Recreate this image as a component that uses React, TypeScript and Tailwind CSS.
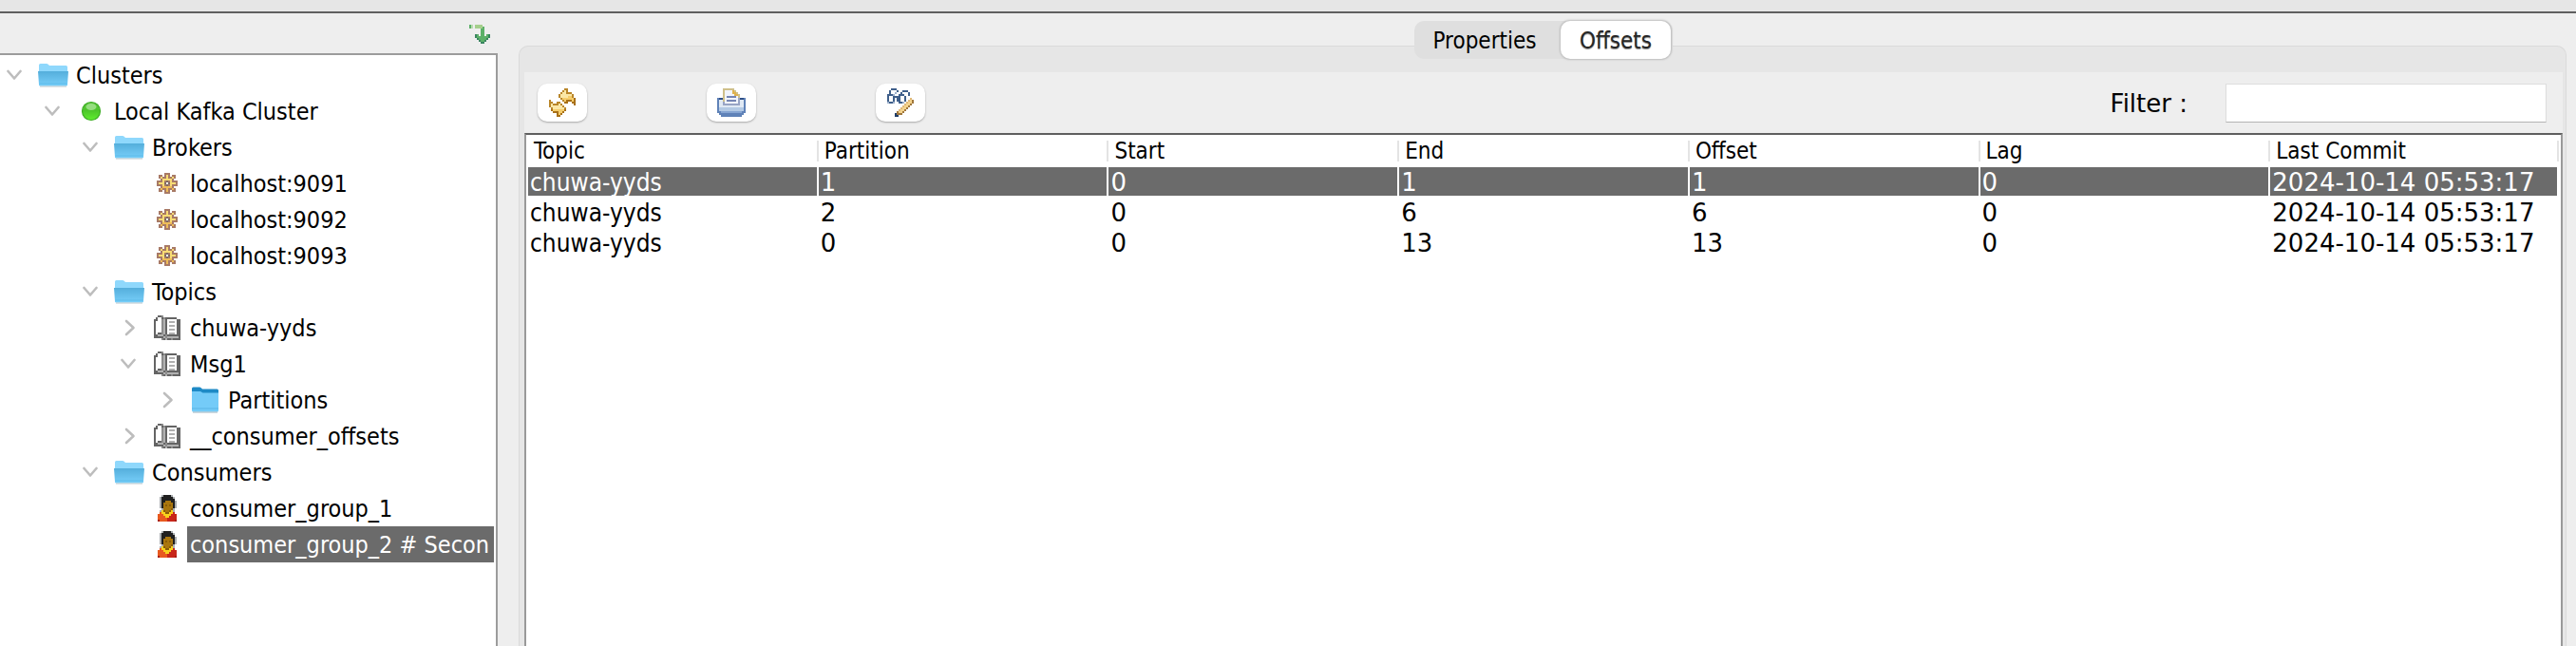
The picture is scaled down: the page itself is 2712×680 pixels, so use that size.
import { useState } from "react";

type Palette = Record<string, string>;

function PixelIcon({ rows, palette }: { rows: string[]; palette: Palette }) {
  const width = rows[0].length;
  const height = rows.length;
  return (
    <svg
      width={width * 2}
      height={height * 2}
      viewBox={`0 0 ${width} ${height}`}
      shapeRendering="crispEdges"
      aria-hidden="true"
      className="shrink-0"
    >
      {rows.flatMap((row, y) =>
        row.split("").map((key, x) =>
          palette[key] ? <rect key={`${x}-${y}`} x={x} y={y} width="1" height="1" fill={palette[key]} /> : null
        )
      )}
    </svg>
  );
}

const ArrowIcon = () => (
  <PixelIcon
    palette={{ G: "#5cb068", H: "#b9dcae", L: "#a5cf8c", D: "#3a8560" }}
    rows={[
      "GH.LLLL....",
      "GH.LLLLG...",
      "......GG...",
      "......GG...",
      "......GG...",
      "...DG.GG.GD",
      "...DGGGGGGD",
      "....DGGGGD.",
      ".....DGGD..",
      "......DD...",
    ]}
  />
);

const RefreshIcon = () => (
  <PixelIcon
    palette={{ D: "#b9862a", L: "#fbe7a6", M: "#f5cd6c", E: "#a87018" }}
    rows={[
      "........DD....",
      ".......DLD....",
      "......DLLDDD..",
      ".....DLLLLLLD.",
      ".....DLLLLMMD.",
      "......DMMMMMME",
      "D......DMEEEME",
      "DD..DD..EE..EE",
      "DLDDDLD......E",
      "DLLLLLLD......",
      ".DLLLLLLD.....",
      ".EMMMMMME.....",
      "..EEEMME......",
      "....EME.......",
      "....EE........",
    ]}
  />
);

const PrinterIcon = () => (
  <PixelIcon
    palette={{
      T: "#cfc08a",
      W: "#f1f4fb",
      O: "#e0b24c",
      P: "#7585b4",
      B: "#5f82b8",
      N: "#2f4f86",
      G: "#98a4c4",
      s: "#e0e9f4",
      m: "#b3c9e4",
      n: "#86a5d2",
    }}
    rows={[
      "...TTTTTT......",
      "...TWWWWOT.....",
      "...TWWWWOOT....",
      "...TWWWWWOOT...",
      "...TWPPPPPWT...",
      "BNNTWWWWWWWGNNB",
      "BssTWPPPPPWGssB",
      "BssGWWWWWWWGssB",
      "BssGGGGGGGGGssB",
      "BsssssssssssssB",
      "BmmmmmmmmmmmmmB",
      "BmmmmmmmmmmmmmB",
      "BBnnnnnnnnnnnBB",
      ".BBBBBBBBBBBBB.",
      "..BBBBBBBBBBB..",
    ]}
  />
);

const GlassesIcon = () => (
  <PixelIcon
    palette={{ G: "#3f5f8a", g: "#9db1cc", D: "#a0773c", L: "#f4d38c", M: "#e0b878", K: "#1f3c66" }}
    rows={[
      "..GGG.........",
      ".G...G..GGG...",
      ".G..g..G...G..",
      "GGGg..GGG..G..",
      "G..GGGG..G....",
      "G..G.GG..G..M.",
      "G..G.GG..G.MLD",
      "gGGg..GGg.MLLD",
      ".........MLLD.",
      "........MLLD..",
      ".......MLLD...",
      "......MLLD....",
      ".....DLLD.....",
      "....KDDD......",
      "....KK........",
    ]}
  />
);

const GearIcon = () => (
  <PixelIcon
    palette={{ D: "#a87a66", L: "#f8dc74", M: "#eebc58", C: "#7d6a62", W: "#ffffff" }}
    rows={[
      "....DDD....",
      ".DD.DLD.DD.",
      ".DLDDLDDLD.",
      "..DLLLLLD..",
      "DDDLDCDLDDD",
      "DLLLCWCLLLD",
      "DDDLDCDLDDD",
      "..DMMMMMD..",
      ".DMDDMDDMD.",
      ".DD.DMD.DD.",
      "....DDD....",
    ]}
  />
);

const BookIcon = () => (
  <PixelIcon
    palette={{ D: "#646464", d: "#8c8c8c", G: "#b0b0b0", W: "#ffffff" }}
    rows={[
      "..DDd.........",
      ".DWWDdDDDDDD..",
      "DDWWdGDWWWWWDD",
      "DWWWdGDWGGGWDD",
      "DWWWdGDWWWWWDD",
      "DWWWdGDWGGGWDD",
      "DWWWdGDWWWWWDD",
      "DWWWdGDWGGGWDD",
      "DWWWdGDWWWWWDD",
      "DWDDdGDWGGGWDD",
      "DDGGGDdDDDDDDD",
      "DDDDDGdGGGGGGD",
      "....dDGDDdDDDD",
    ]}
  />
);

const PersonIcon = () => (
  <PixelIcon
    palette={{ K: "#1f1f1f", g: "#a9adb0", B: "#a9760e", b: "#8a5c08", O: "#e8591f", Y: "#f8d21c", R: "#c8261a", r: "#a81c14" }}
    rows={[
      "..gKKKKg..",
      ".gKKKKKKg.",
      ".gKKKKKKK.",
      ".gKKBBBKKg",
      ".gKBBBBBKg",
      ".gKBbBbBKg",
      ".gKBBBBBKg",
      "..gBBBBbg.",
      ".gYbBBbYg.",
      ".OYYbbYYR.",
      "OOOYYYYRRR",
      "OOOOYYRRRR",
      "OOOOORRRRR",
      "rOOOORRRRr",
    ]}
  />
);

const OpenFolderIcon = () => (
  <svg width="32" height="26" viewBox="0 0 32 26" aria-hidden="true" className="shrink-0">
    <defs>
      <linearGradient id="folder-front" x1="0" y1="0" x2="0" y2="1">
        <stop offset="0" stopColor="#54aedb" />
        <stop offset="1" stopColor="#78cffa" />
      </linearGradient>
    </defs>
    <path d="M1 2.5Q1 1 2.500 1H9Q10 1 11 2L12 3H29.500Q31 3 31 4.500V24H1Z" fill="#8fd8fc" />
    <path d="M0 9H32L31 23Q31 24.500 29.500 24.500H2.500Q1 24.500 1 23Z" fill="url(#folder-front)" />
    <path d="M1.500 22H30.500" stroke="#5fbbe8" strokeWidth="1" />
    <path d="M2 25H30" stroke="#b9c6cc" strokeWidth="1" />
  </svg>
);

const ClosedFolderIcon = () => (
  <svg width="30" height="30" viewBox="0 0 30 30" aria-hidden="true" className="shrink-0">
    <path d="M1 3Q1 1.500 2.500 1.500H9Q10 1.500 11 2.500L12 3.500H27.500Q29 3.500 29 5V10H1Z" fill="#1e8ac6" />
    <path d="M1 6H10L12.500 7.500H29V26Q29 27.500 27.500 27.500H2.500Q1 27.500 1 26Z" fill="#74cbf8" />
    <path d="M1 24H29" stroke="#5ab4e4" strokeWidth="1" />
    <path d="M2 28H28" stroke="#9fb4bf" strokeWidth="1" />
  </svg>
);

const OnlineIcon = () => (
  <svg width="22" height="22" viewBox="0 0 22 22" aria-hidden="true" className="shrink-0">
    <defs>
      <linearGradient id="online" x1="0" y1="0" x2="0" y2="1">
        <stop offset="0" stopColor="#5fc840" />
        <stop offset="0.45" stopColor="#4cc42a" />
        <stop offset="1" stopColor="#5fee2e" />
      </linearGradient>
    </defs>
    <circle cx="11" cy="11" r="9.500" fill="url(#online)" stroke="#3fae26" strokeWidth="1.200" />
    <ellipse cx="11" cy="6.500" rx="5.500" ry="3.500" fill="#a6e394" opacity="0.8" />
  </svg>
);

const Chevron = ({ open }: { open: boolean }) => (
  <svg width="16" height="18" viewBox="0 0 16 18" fill="none" stroke="#bdbdbd" strokeWidth="2.600" strokeLinecap="round" strokeLinejoin="round" aria-hidden="true">
    <path d={open ? "M1.500 5L8 12.500L14.500 5" : "M6 2L13.500 9L6 16"} />
  </svg>
);

const icons = {
  folder: OpenFolderIcon,
  closed: ClosedFolderIcon,
  online: OnlineIcon,
  gear: GearIcon,
  book: BookIcon,
  person: PersonIcon,
};

type Node = { label: string; depth: number; icon: keyof typeof icons; open?: boolean };

const nodes: Node[] = [
  { label: "Clusters", depth: 0, icon: "folder", open: true },
  { label: "Local Kafka Cluster", depth: 1, icon: "online", open: true },
  { label: "Brokers", depth: 2, icon: "folder", open: true },
  { label: "localhost:9091", depth: 3, icon: "gear" },
  { label: "localhost:9092", depth: 3, icon: "gear" },
  { label: "localhost:9093", depth: 3, icon: "gear" },
  { label: "Topics", depth: 2, icon: "folder", open: true },
  { label: "chuwa-yyds", depth: 3, icon: "book", open: false },
  { label: "Msg1", depth: 3, icon: "book", open: true },
  { label: "Partitions", depth: 4, icon: "closed", open: false },
  { label: "__consumer_offsets", depth: 3, icon: "book", open: false },
  { label: "Consumers", depth: 2, icon: "folder", open: true },
  { label: "consumer_group_1", depth: 3, icon: "person" },
  { label: "consumer_group_2 # Secon", depth: 3, icon: "person" },
];

function Tree() {
  const [selected, setSelected] = useState(nodes.length - 1);
  return (
    <ul role="tree" aria-label="Clusters" className="min-h-0 flex-1 overflow-hidden border-t-2 border-r-2 border-[#9c9c9c] bg-white p-0.5 pl-0">
      {nodes.map((node, i) => {
        const Icon = icons[node.icon];
        return (
          <li
            key={node.label}
            role="treeitem"
            aria-selected={i === selected}
            aria-expanded={node.open}
            className="flex h-[38px] items-center"
            style={{ paddingLeft: 7 + node.depth * 40 }}
          >
            <span className="flex w-4 shrink-0 justify-center">
              {node.open !== undefined && <Chevron open={node.open} />}
            </span>
            <span className="ml-4 flex w-[34px] shrink-0 justify-center">
              <Icon />
            </span>
            <button
              type="button"
              onClick={() => setSelected(i)}
              className={
                "ml-1 h-[38px] px-[3px] text-left text-[25px] leading-[40px] whitespace-nowrap " +
                (i === selected ? "min-w-0 flex-1 bg-[#6b6b6b] text-white" : "text-black")
              }
            >
              {node.label}
            </button>
          </li>
        );
      })}
    </ul>
  );
}

const columns = ["Topic", "Partition", "Start", "End", "Offset", "Lag", "Last Commit"];
const records = [
  ["chuwa-yyds", "1", "0", "1", "1", "0", "2024-10-14 05:53:17"],
  ["chuwa-yyds", "2", "0", "6", "6", "0", "2024-10-14 05:53:17"],
  ["chuwa-yyds", "0", "0", "13", "13", "0", "2024-10-14 05:53:17"],
];

function OffsetsTable() {
  return (
    <div className="min-h-0 flex-1 overflow-hidden border-x-2 border-t-2 border-x-[#999999] border-t-[#5f5f5f] bg-white px-0.5">
      <table className="w-full table-fixed border-collapse text-left">
        <colgroup>
          {columns.map((name, i) => (
            <col key={name} className={i < columns.length - 1 ? "w-[14.3%]" : ""} />
          ))}
        </colgroup>
        <thead>
          <tr className="h-[34px]">
            {columns.map((name) => (
              <th key={name} scope="col" className="p-0 text-2xl font-normal">
                <div className="h-[22px] border-r-2 border-[#e4e4e4] pl-1.5 leading-[22px]">{name}</div>
              </th>
            ))}
          </tr>
        </thead>
        <tbody>
          {records.map((record, r) => (
            <tr key={r} className={r === 0 ? "h-8 text-white" : "h-8 text-black"}>
              {record.map((value, c) => (
                <td key={columns[c]} className="p-0 pr-0.5 pb-0.5">
                  <div
                    className={
                      (r === 0 ? "bg-[#6b6b6b] " : "") +
                      (c === 0 ? "" : "font-['DejaVu_Sans',sans-serif] ") +
                      "h-[30px] pl-0.5 text-[26px] leading-[32px] whitespace-nowrap"
                    }
                  >
                    {value}
                  </div>
                </td>
              ))}
            </tr>
          ))}
        </tbody>
      </table>
    </div>
  );
}

const tools = [
  { name: "Refresh", Icon: RefreshIcon },
  { name: "Print", Icon: PrinterIcon },
  { name: "View settings", Icon: GlassesIcon },
];

export default function App() {
  return (
    <div className="flex h-screen flex-col overflow-hidden bg-[#eeeeee] font-['DejaVu_Sans_Condensed','DejaVu_Sans',sans-serif] text-black">
      <div className="h-3.5 shrink-0 border-b-2 border-[#5f5f5f] bg-[#e6e6e6]" />
      <div className="flex min-h-0 flex-1">
        <aside className="flex w-[524px] shrink-0 flex-col">
          <div className="flex h-[42px] shrink-0 items-start justify-end pt-3 pr-2">
            <button type="button" aria-label="Jump to selection">
              <ArrowIcon />
            </button>
          </div>
          <Tree />
        </aside>

        <main className="mt-[34px] mr-2.5 ml-[22px] flex min-w-0 flex-1 flex-col rounded-t-[10px] border border-b-0 border-[#dadada] bg-[#e6e6e6] pr-[3px] pl-[5px]">
          <div role="tablist" className="-mt-[27px] mb-3.5 flex h-10 shrink-0 self-center rounded-[10px] bg-[#dfdfdf] pr-0.5 text-2xl">
            <button type="button" role="tab" aria-selected="false" className="w-[154px] pt-0.5 pr-1.5 text-center">
              Properties
            </button>
            <button
              type="button"
              role="tab"
              aria-selected="true"
              className="w-[116px] rounded-[10px] bg-white pt-0.5 text-center text-[#262626] shadow-[0_0_2px_1px_#bdbdbd] text-shadow-[0_1px_1px_#8a8a8a]"
            >
              Offsets
            </button>
          </div>

          <div className="flex min-h-0 flex-1 flex-col bg-[#eeeeee]">
            <div className="flex h-16 shrink-0 items-center pr-[17px] pl-3.5">
              <div className="flex gap-[126px]">
                {tools.map(({ name, Icon }) => (
                  <button
                    key={name}
                    type="button"
                    aria-label={name}
                    className="flex h-10 w-[52px] items-center justify-center rounded-[10px] bg-white shadow-[0_1px_2px_#a8a8a8]"
                  >
                    <Icon />
                  </button>
                ))}
              </div>
              <label htmlFor="filter" className="mr-10 ml-auto pt-0.5 font-['DejaVu_Sans',sans-serif] text-[26px]">
                Filter :
              </label>
              <input
                id="filter"
                type="text"
                className="h-[41px] w-[338px] border border-[#dddddd] border-b-[#b4b4b4] bg-white px-2 text-2xl outline-none"
              />
            </div>
            <OffsetsTable />
          </div>
        </main>
      </div>
    </div>
  );
}
